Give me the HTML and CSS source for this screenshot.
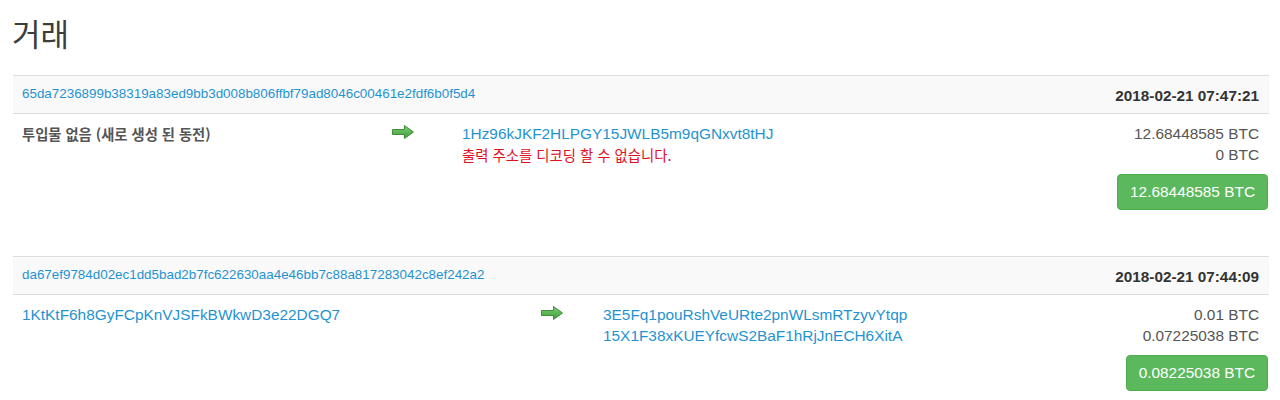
FILE: index.html
```html
<!DOCTYPE html>
<html lang="ko">
<head>
<meta charset="utf-8">
<title>거래</title>
<link rel="stylesheet" href="styles.css">
</head>
<body>
<div class="page">
  <h1 class="title">거래</h1>

  <div class="tx">
    <div class="tx-head">
      <a class="hash" href="#">65da7236899b38319a83ed9bb3d008b806ffbf79ad8046c00461e2fdf6b0f5d4</a>
      <span class="time">2018-02-21 07:47:21</span>
    </div>
    <div class="tx-body tx-body-a">
      <div class="ins"><span class="coinbase">투입물 없음 (새로 생성 된 동전)</span></div>
      <div class="arrow">
        <svg width="22" height="14" viewBox="0 0 22 14"><defs><linearGradient id="ga" x1="0" y1="0" x2="0" y2="1"><stop offset="0" stop-color="#7fcf72"/><stop offset="1" stop-color="#3e9b3a"/></linearGradient></defs><path d="M0.5 4.5H12.5V0.5L21.5 7L12.5 13.5V9.5H0.5Z" fill="url(#ga)" stroke="#3f8f3a" stroke-width="1"/></svg>
      </div>
      <div class="outs">
        <div class="out"><a class="addr" href="#">1Hz96kJKF2HLPGY15JWLB5m9qGNxvt8tHJ</a><span class="amt">12.68448585 BTC</span></div>
        <div class="out"><span class="err">출력 주소를 디코딩 할 수 없습니다.</span><span class="amt">0 BTC</span></div>
      </div>
    </div>
    <div class="tx-foot"><button class="total">12.68448585 BTC</button></div>
  </div>

  <div class="tx">
    <div class="tx-head">
      <a class="hash" href="#">da67ef9784d02ec1dd5bad2b7fc622630aa4e46bb7c88a817283042c8ef242a2</a>
      <span class="time">2018-02-21 07:44:09</span>
    </div>
    <div class="tx-body tx-body-b">
      <div class="ins"><a class="addr" href="#">1KtKtF6h8GyFCpKnVJSFkBWkwD3e22DGQ7</a></div>
      <div class="arrow">
        <svg width="22" height="14" viewBox="0 0 22 14"><defs><linearGradient id="gb" x1="0" y1="0" x2="0" y2="1"><stop offset="0" stop-color="#7fcf72"/><stop offset="1" stop-color="#3e9b3a"/></linearGradient></defs><path d="M0.5 4.5H12.5V0.5L21.5 7L12.5 13.5V9.5H0.5Z" fill="url(#gb)" stroke="#3f8f3a" stroke-width="1"/></svg>
      </div>
      <div class="outs">
        <div class="out"><a class="addr" href="#">3E5Fq1pouRshVeURte2pnWLsmRTzyvYtqp</a><span class="amt">0.01 BTC</span></div>
        <div class="out"><a class="addr" href="#">15X1F38xKUEYfcwS2BaF1hRjJnECH6XitA</a><span class="amt">0.07225038 BTC</span></div>
      </div>
    </div>
    <div class="tx-foot"><button class="total">0.08225038 BTC</button></div>
  </div>
</div>
</body>
</html>
```

FILE: styles.css
```css
html, body {
  margin: 0;
  padding: 0;
  background: #fff;
}

body {
  font-family: "Liberation Sans", "Noto Sans CJK KR", Arial, sans-serif;
  font-size: 15.4px;
  color: #555;
}

.page {
  width: 1256px;
  margin-left: 13px;
}

.title {
  font-family: "Noto Sans CJK KR", "Liberation Sans", sans-serif;
  font-size: 31px;
  font-weight: 400;
  line-height: 40px;
  color: #3d3d3d;
  margin: 13px 0 22px -1px;
}

.tx {
  padding-bottom: 46px;
}

.tx-head {
  display: flex;
  justify-content: space-between;
  align-items: flex-start;
  height: 37px;
  box-sizing: content-box;
  padding: 0 10px 0 9px;
  background: #f9f9f9;
  border-top: 1px solid #ddd;
  border-bottom: 1px solid #ddd;
}

.hash {
  font-size: 13.4px;
  line-height: 18px;
  padding-top: 9px;
  color: #1f93d1;
  text-decoration: none;
}

.time {
  font-weight: 700;
  font-size: 15.3px;
  line-height: 22px;
  padding-top: 9px;
  color: #333;
}

.tx-body {
  display: grid;
  align-items: start;
  padding: 9px 10px 8px 9px;
  line-height: 21px;
}

.tx-body-a {
  grid-template-columns: 370px 70px 1fr;
}

.tx-body-b {
  grid-template-columns: 519px 62px 1fr;
}

.coinbase {
  font-family: "Noto Sans CJK KR", "Liberation Sans", sans-serif;
  font-weight: 700;
  font-size: 14.3px;
  color: #555;
}

.arrow {
  height: 21px;
  display: flex;
  align-items: flex-start;
  padding-top: 2px;
  box-sizing: border-box;
}

.arrow svg {
  display: block;
}

.out {
  display: flex;
  justify-content: space-between;
  height: 21px;
}

.addr {
  color: #1f93d1;
  text-decoration: none;
}

.err {
  font-family: "Noto Sans CJK KR", "Liberation Sans", sans-serif;
  font-size: 14.4px;
  color: #e0101e;
}

.amt {
  color: #555;
}

.tx-foot {
  display: flex;
  justify-content: flex-end;
  padding-top: 1px;
  margin-right: 1px;
}

.total {
  font-family: "Liberation Sans", Arial, sans-serif;
  font-size: 15.4px;
  line-height: 22px;
  height: 36px;
  padding: 6px 12px;
  color: #fff;
  background: #5cb85c;
  border: 1px solid #4cae4c;
  border-radius: 4px;
}
```
